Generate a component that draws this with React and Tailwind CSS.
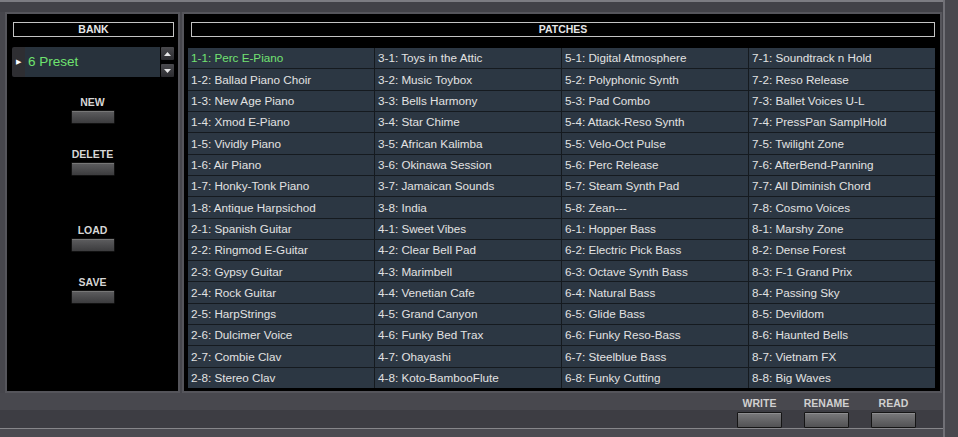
import React from 'react';

const patches = [
    '1-1: Perc E-Piano', '1-2: Ballad Piano Choir', '1-3: New Age Piano', '1-4: Xmod E-Piano',
    '1-5: Vividly Piano', '1-6: Air Piano', '1-7: Honky-Tonk Piano', '1-8: Antique Harpsichod',
    '2-1: Spanish Guitar', '2-2: Ringmod E-Guitar', '2-3: Gypsy Guitar', '2-4: Rock Guitar',
    '2-5: HarpStrings', '2-6: Dulcimer Voice', '2-7: Combie Clav', '2-8: Stereo Clav',
    '3-1: Toys in the Attic', '3-2: Music Toybox', '3-3: Bells Harmony', '3-4: Star Chime',
    '3-5: African Kalimba', '3-6: Okinawa Session', '3-7: Jamaican Sounds', '3-8: India',
    '4-1: Sweet Vibes', '4-2: Clear Bell Pad', '4-3: Marimbell', '4-4: Venetian Cafe',
    '4-5: Grand Canyon', '4-6: Funky Bed Trax', '4-7: Ohayashi', '4-8: Koto-BambooFlute',
    '5-1: Digital Atmosphere', '5-2: Polyphonic Synth', '5-3: Pad Combo', '5-4: Attack-Reso Synth',
    '5-5: Velo-Oct Pulse', '5-6: Perc Release', '5-7: Steam Synth Pad', '5-8: Zean---',
    '6-1: Hopper Bass', '6-2: Electric Pick Bass', '6-3: Octave Synth Bass', '6-4: Natural Bass',
    '6-5: Glide Bass', '6-6: Funky Reso-Bass', '6-7: Steelblue Bass', '6-8: Funky Cutting',
    '7-1: Soundtrack n Hold', '7-2: Reso Release', '7-3: Ballet Voices U-L', '7-4: PressPan SamplHold',
    '7-5: Twilight Zone', '7-6: AfterBend-Panning', '7-7: All Diminish Chord', '7-8: Cosmo Voices',
    '8-1: Marshy Zone', '8-2: Dense Forest', '8-3: F-1 Grand Prix', '8-4: Passing Sky',
    '8-5: Devildom', '8-6: Haunted Bells', '8-7: Vietnam FX', '8-8: Big Waves',
];

const font = { fontFamily: '"Liberation Sans", Arial, sans-serif' };

const HeaderBox = ({ children, className }) => (
    <div className={`flex h-[15px] items-center justify-center border border-[#c4c4c4] bg-black text-[10.5px] font-bold leading-none text-[#e6e6e6] ${className}`}>
        {children}
    </div>
);

const SideButton = ({ label, labelMt, btnMt = 'mt-[2px]' }) => (
    <div className={`flex flex-col items-center ${labelMt}`}>
        <div className="h-[12px] text-[10.5px] font-bold leading-[12px] text-[#d6d6d6]">{label}</div>
        <div className={`${btnMt} h-[14px] w-[44px] rounded-[1px] border border-[#111] bg-gradient-to-b from-[#5e5e60] to-[#3c3c3e] shadow-[inset_0_1px_0_#777]`} />
    </div>
);

const BottomButton = ({ label }) => (
    <div className="flex w-[45px] flex-col items-center">
        <div className="mt-[4px] h-[12px] text-[10.5px] font-bold leading-[12px] text-[#d0d0d0]">{label}</div>
        <div className="mt-[3px] h-[16px] w-[45px] rounded-[1px] border border-[#151515] bg-gradient-to-b from-[#7a7a7c] to-[#525254] shadow-[inset_0_1px_0_#8e8e90]" />
    </div>
);

const App = () => {
    return (
        <div className="flex h-[437px] w-[958px] overflow-hidden bg-[#46464c]" style={font}>
            <div className="flex w-[943px] flex-col">
                {/* top strip */}
                <div className="h-[12px] border-t-[2px] border-[#7c7c82] bg-[#424248]" />

                <div className="flex h-[381px]">
                    {/* bank */}
                    <div className="ml-[5px] flex w-[175px] flex-col border-2 border-[#55555b] bg-black">
                        <HeaderBox className="ml-[6px] mr-[4px] mt-[8px]">BANK</HeaderBox>
                        <div className="ml-[5px] mr-[4px] mt-[10px] flex h-[30px]">
                            <div className="flex w-[13px] items-center justify-center rounded-l-[2px] bg-[#2e2e32] text-[7px] text-white">▶</div>
                            <div className="flex flex-1 items-center bg-[#28323c] pl-[3px] text-[13.5px] text-[#6fe36f]">6 Preset</div>
                            <div className="ml-[1px] flex w-[13px] flex-col justify-between">
                                <div className="flex h-[13px] items-center justify-center rounded-[1px] bg-gradient-to-b from-[#4a4a4e] to-[#2c2c30]">
                                    <svg width="7" height="4" viewBox="0 0 7 4"><path d="M3.5 0L7 4H0z" fill="#e8e8e8" /></svg>
                                </div>
                                <div className="flex h-[13px] items-center justify-center rounded-[1px] bg-gradient-to-b from-[#4a4a4e] to-[#2c2c30]">
                                    <svg width="7" height="4" viewBox="0 0 7 4"><path d="M0 0H7L3.5 4z" fill="#e8e8e8" /></svg>
                                </div>
                            </div>
                        </div>
                        <SideButton label="NEW" labelMt="mt-[19px]" />
                        <SideButton label="DELETE" labelMt="mt-[24px]" />
                        <SideButton label="LOAD" labelMt="mt-[48px]" />
                        <SideButton label="SAVE" labelMt="mt-[24px]" />
                    </div>

                    {/* patches */}
                    <div className="ml-[2px] flex w-[760px] flex-col border-2 border-[#55555b] bg-black">
                        <HeaderBox className="ml-[7px] mr-[5px] mt-[8px]">PATCHES</HeaderBox>
                        <div className="ml-[4px] mt-[11px] grid h-[340px] w-[747px] grid-flow-col grid-cols-4 grid-rows-16 gap-px bg-[#151a1f]">
                            {patches.map((p, i) => (
                                <div key={p} className={`flex items-center overflow-hidden whitespace-nowrap bg-[#2c3743] pl-[3px] text-[11.7px] ${i === 0 ? 'text-[#72e272]' : 'text-[#e2e2e2]'}`}>
                                    {p}
                                </div>
                            ))}
                        </div>
                    </div>
                </div>

                {/* bottom bar */}
                <div className="flex flex-1 justify-end gap-[22px] bg-[linear-gradient(to_bottom,#48484e_0px,#48484e_17px,#3d3d43_17px,#3d3d43_35px,#86868a_35px,#86868a_36px,#4b4b51_36px)] pr-[27px]">
                    <BottomButton label="WRITE" />
                    <BottomButton label="RENAME" />
                    <BottomButton label="READ" />
                </div>
            </div>

            {/* right edge */}
            <div className="flex-1 border-l-[2px] border-[#707076] bg-[#48484e]" />
        </div>
    );
};

export default App;
